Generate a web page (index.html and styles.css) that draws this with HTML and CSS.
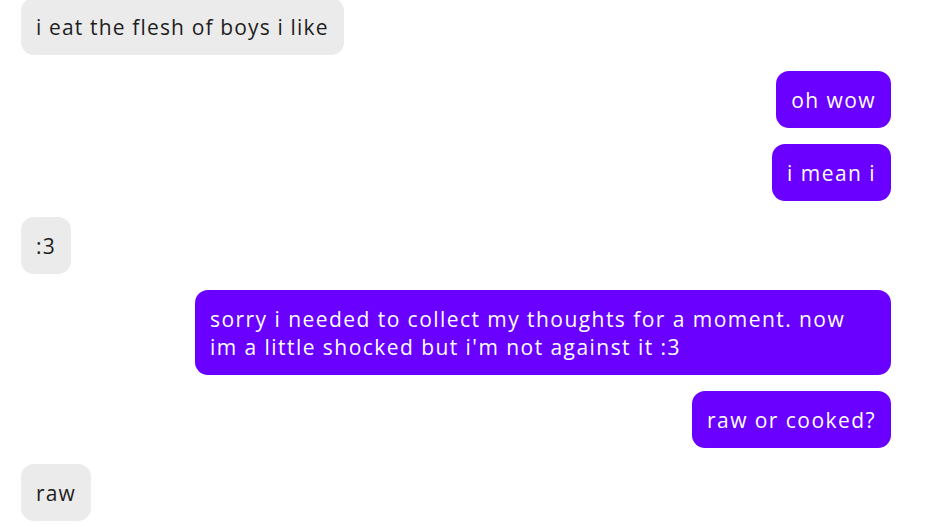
FILE: index.html
```html
<!DOCTYPE html>
<html>
<head>
<meta charset="utf-8">
<link rel="stylesheet" href="styles.css">
</head>
<body>
<div class="chat">
  <div class="msg recv first">i eat the flesh of boys i like</div>
  <div class="msg sent">oh wow</div>
  <div class="msg sent">i mean i</div>
  <div class="msg recv">:3</div>
  <div class="msg sent">sorry i needed to collect my thoughts for a moment. now im a little shocked but i'm not against it :3</div>
  <div class="msg sent">raw or cooked?</div>
  <div class="msg recv">raw</div>
</div>
</body>
</html>
```
FILE: styles.css
```css
html, body {
  margin: 0;
  padding: 0;
  background: #ffffff;
}
body {
  font-family: "Open Sans", "DejaVu Sans", sans-serif;
  overflow: hidden;
}
.chat {
  display: flex;
  flex-direction: column;
  gap: 16px;
  padding: 0 36px 0 21px;
}
.msg {
  box-sizing: border-box;
  font-size: 21px;
  line-height: 28px;
  letter-spacing: 1.15px;
  padding: 14.5px 15px;
  border-radius: 13px;
  max-width: 696px;
}
.first {
  margin-top: -2px;
}
.recv {
  align-self: flex-start;
  background: #ebebeb;
  color: #1e1e1e;
}
.sent {
  align-self: flex-end;
  background: #6a00ff;
  color: #ffffff;
  letter-spacing: 1.45px;
}
```
